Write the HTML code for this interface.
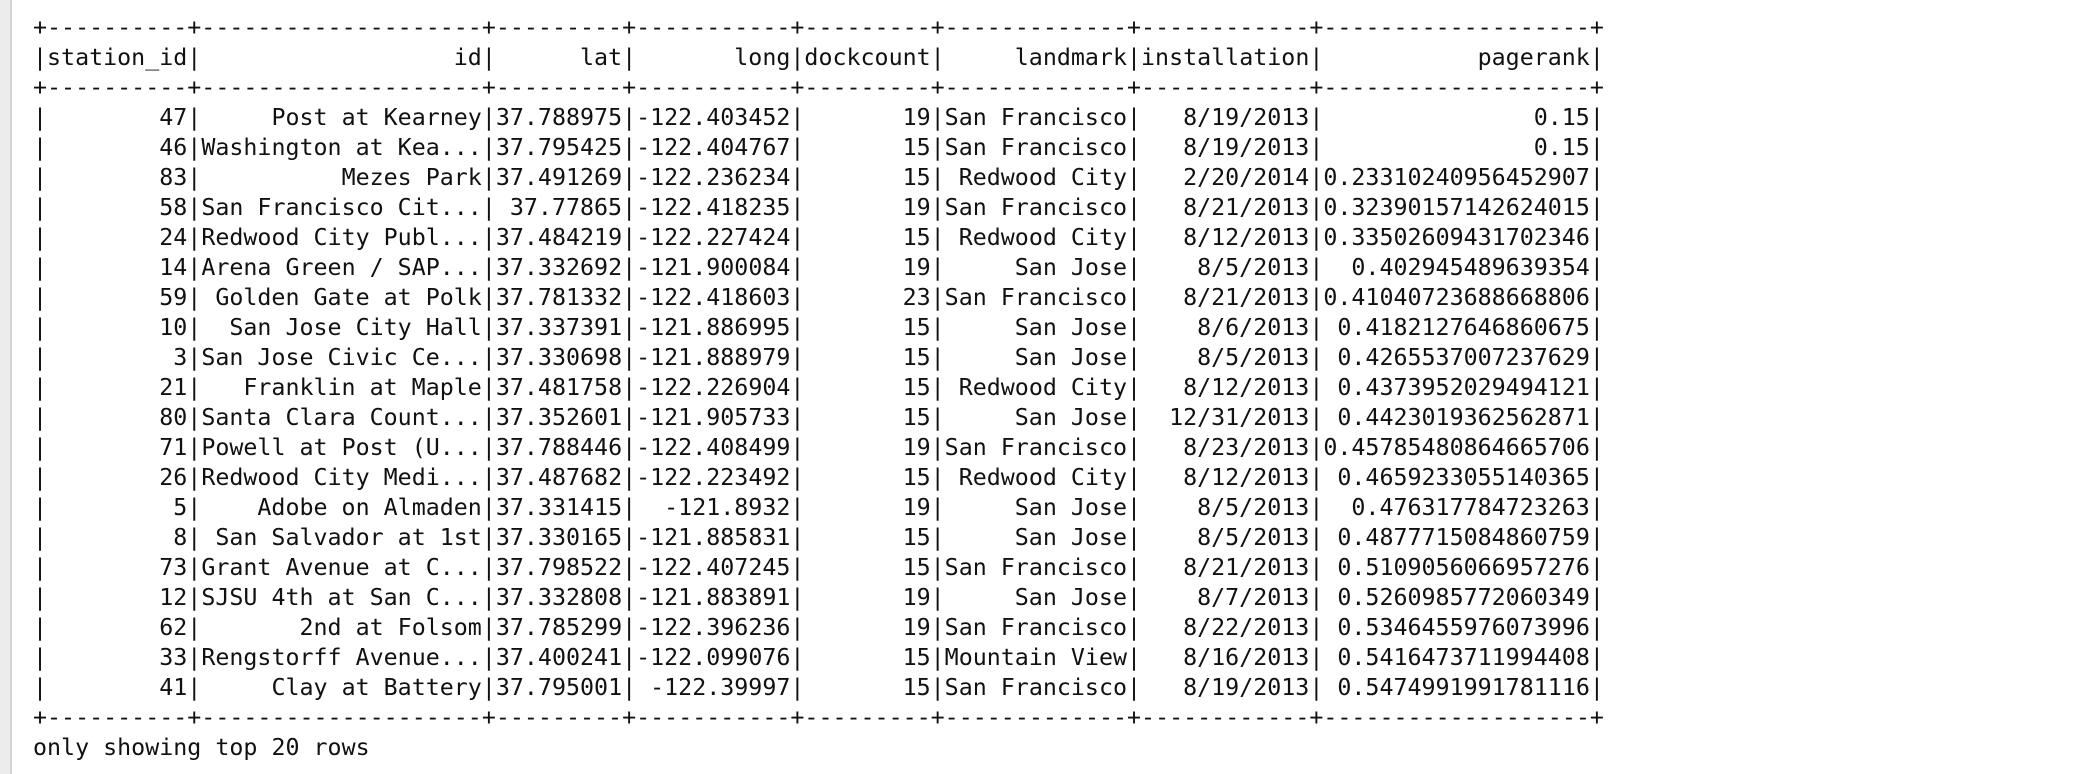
<!DOCTYPE html>
<html><head><meta charset="utf-8"><style>
html,body{margin:0;padding:0;background:#fff;width:2096px;height:774px;overflow:hidden}
.bar{position:absolute;left:0;top:0;width:10px;height:774px;background:#ececec;border-right:2px solid #d4d4d4}
.t{position:absolute;left:33px;top:13px;font-family:"DejaVu Sans Mono","Liberation Mono",monospace;font-size:23.3px;line-height:30px;color:#111}
.t div{height:30px;white-space:pre}
.t span{display:inline-block;text-align:right}
.a{width:10ch}.b{width:20ch}.c{width:9ch}.d{width:11ch}.e{width:9ch}.f{width:13ch}.g{width:12ch}.h{width:19ch}
</style></head><body>
<div class="bar"></div>
<div class="t"><div>+----------+--------------------+---------+-----------+---------+-------------+------------+-------------------+</div><div>|<span class="a">station_id</span>|<span class="b">id</span>|<span class="c">lat</span>|<span class="d">long</span>|<span class="e">dockcount</span>|<span class="f">landmark</span>|<span class="g">installation</span>|<span class="h">pagerank</span>|</div><div>+----------+--------------------+---------+-----------+---------+-------------+------------+-------------------+</div><div>|<span class="a">47</span>|<span class="b">Post at Kearney</span>|<span class="c">37.788975</span>|<span class="d">-122.403452</span>|<span class="e">19</span>|<span class="f">San Francisco</span>|<span class="g">8/19/2013</span>|<span class="h">0.15</span>|</div><div>|<span class="a">46</span>|<span class="b">Washington at Kea...</span>|<span class="c">37.795425</span>|<span class="d">-122.404767</span>|<span class="e">15</span>|<span class="f">San Francisco</span>|<span class="g">8/19/2013</span>|<span class="h">0.15</span>|</div><div>|<span class="a">83</span>|<span class="b">Mezes Park</span>|<span class="c">37.491269</span>|<span class="d">-122.236234</span>|<span class="e">15</span>|<span class="f">Redwood City</span>|<span class="g">2/20/2014</span>|<span class="h">0.23310240956452907</span>|</div><div>|<span class="a">58</span>|<span class="b">San Francisco Cit...</span>|<span class="c">37.77865</span>|<span class="d">-122.418235</span>|<span class="e">19</span>|<span class="f">San Francisco</span>|<span class="g">8/21/2013</span>|<span class="h">0.32390157142624015</span>|</div><div>|<span class="a">24</span>|<span class="b">Redwood City Publ...</span>|<span class="c">37.484219</span>|<span class="d">-122.227424</span>|<span class="e">15</span>|<span class="f">Redwood City</span>|<span class="g">8/12/2013</span>|<span class="h">0.33502609431702346</span>|</div><div>|<span class="a">14</span>|<span class="b">Arena Green / SAP...</span>|<span class="c">37.332692</span>|<span class="d">-121.900084</span>|<span class="e">19</span>|<span class="f">San Jose</span>|<span class="g">8/5/2013</span>|<span class="h">0.402945489639354</span>|</div><div>|<span class="a">59</span>|<span class="b">Golden Gate at Polk</span>|<span class="c">37.781332</span>|<span class="d">-122.418603</span>|<span class="e">23</span>|<span class="f">San Francisco</span>|<span class="g">8/21/2013</span>|<span class="h">0.41040723688668806</span>|</div><div>|<span class="a">10</span>|<span class="b">San Jose City Hall</span>|<span class="c">37.337391</span>|<span class="d">-121.886995</span>|<span class="e">15</span>|<span class="f">San Jose</span>|<span class="g">8/6/2013</span>|<span class="h">0.4182127646860675</span>|</div><div>|<span class="a">3</span>|<span class="b">San Jose Civic Ce...</span>|<span class="c">37.330698</span>|<span class="d">-121.888979</span>|<span class="e">15</span>|<span class="f">San Jose</span>|<span class="g">8/5/2013</span>|<span class="h">0.4265537007237629</span>|</div><div>|<span class="a">21</span>|<span class="b">Franklin at Maple</span>|<span class="c">37.481758</span>|<span class="d">-122.226904</span>|<span class="e">15</span>|<span class="f">Redwood City</span>|<span class="g">8/12/2013</span>|<span class="h">0.4373952029494121</span>|</div><div>|<span class="a">80</span>|<span class="b">Santa Clara Count...</span>|<span class="c">37.352601</span>|<span class="d">-121.905733</span>|<span class="e">15</span>|<span class="f">San Jose</span>|<span class="g">12/31/2013</span>|<span class="h">0.4423019362562871</span>|</div><div>|<span class="a">71</span>|<span class="b">Powell at Post (U...</span>|<span class="c">37.788446</span>|<span class="d">-122.408499</span>|<span class="e">19</span>|<span class="f">San Francisco</span>|<span class="g">8/23/2013</span>|<span class="h">0.45785480864665706</span>|</div><div>|<span class="a">26</span>|<span class="b">Redwood City Medi...</span>|<span class="c">37.487682</span>|<span class="d">-122.223492</span>|<span class="e">15</span>|<span class="f">Redwood City</span>|<span class="g">8/12/2013</span>|<span class="h">0.4659233055140365</span>|</div><div>|<span class="a">5</span>|<span class="b">Adobe on Almaden</span>|<span class="c">37.331415</span>|<span class="d">-121.8932</span>|<span class="e">19</span>|<span class="f">San Jose</span>|<span class="g">8/5/2013</span>|<span class="h">0.476317784723263</span>|</div><div>|<span class="a">8</span>|<span class="b">San Salvador at 1st</span>|<span class="c">37.330165</span>|<span class="d">-121.885831</span>|<span class="e">15</span>|<span class="f">San Jose</span>|<span class="g">8/5/2013</span>|<span class="h">0.4877715084860759</span>|</div><div>|<span class="a">73</span>|<span class="b">Grant Avenue at C...</span>|<span class="c">37.798522</span>|<span class="d">-122.407245</span>|<span class="e">15</span>|<span class="f">San Francisco</span>|<span class="g">8/21/2013</span>|<span class="h">0.5109056066957276</span>|</div><div>|<span class="a">12</span>|<span class="b">SJSU 4th at San C...</span>|<span class="c">37.332808</span>|<span class="d">-121.883891</span>|<span class="e">19</span>|<span class="f">San Jose</span>|<span class="g">8/7/2013</span>|<span class="h">0.5260985772060349</span>|</div><div>|<span class="a">62</span>|<span class="b">2nd at Folsom</span>|<span class="c">37.785299</span>|<span class="d">-122.396236</span>|<span class="e">19</span>|<span class="f">San Francisco</span>|<span class="g">8/22/2013</span>|<span class="h">0.5346455976073996</span>|</div><div>|<span class="a">33</span>|<span class="b">Rengstorff Avenue...</span>|<span class="c">37.400241</span>|<span class="d">-122.099076</span>|<span class="e">15</span>|<span class="f">Mountain View</span>|<span class="g">8/16/2013</span>|<span class="h">0.5416473711994408</span>|</div><div>|<span class="a">41</span>|<span class="b">Clay at Battery</span>|<span class="c">37.795001</span>|<span class="d">-122.39997</span>|<span class="e">15</span>|<span class="f">San Francisco</span>|<span class="g">8/19/2013</span>|<span class="h">0.5474991991781116</span>|</div><div>+----------+--------------------+---------+-----------+---------+-------------+------------+-------------------+</div><div>only showing top 20 rows</div></div>
</body></html>
